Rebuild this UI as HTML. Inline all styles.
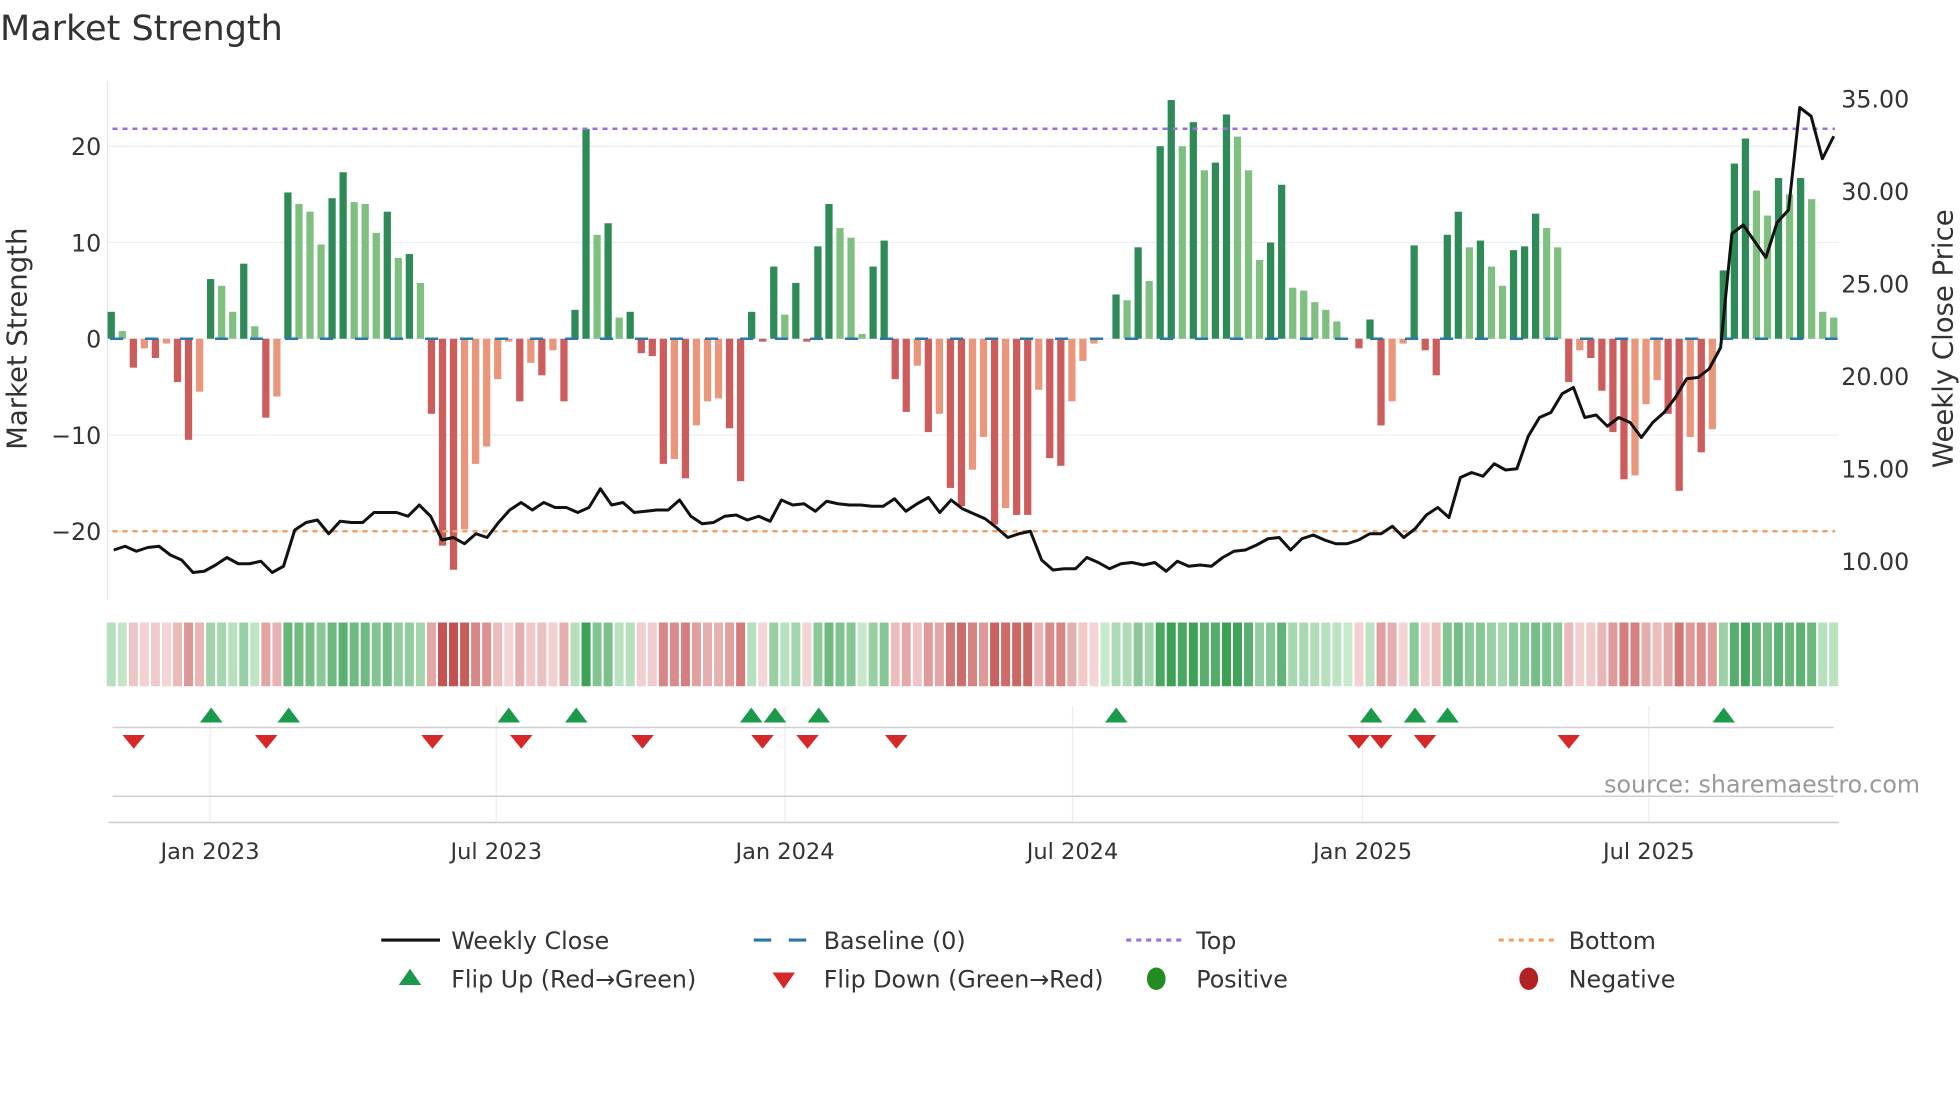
<!DOCTYPE html>
<html><head><meta charset="utf-8"><style>
html,body{margin:0;padding:0;background:#fff;width:1960px;height:1102px;overflow:hidden}
svg{display:block}
text{font-family:"DejaVu Sans","Liberation Sans",sans-serif;fill:#333}
</style></head><body>
<svg id="s" width="1960" height="1102" viewBox="0 0 1568 881.6" xmlns="http://www.w3.org/2000/svg">
<text x="0" y="32" font-size="28">Market Strength</text>
<g id="grid"></g>
<g id="bars"></g>
<line x1="88" y1="271" x2="1470" y2="271" stroke="#2a78a8" stroke-width="2" stroke-dasharray="10.5,17.5"/>
<line x1="90" y1="103" x2="1468" y2="103" stroke="#9b6fe0" stroke-width="2" stroke-dasharray="4,4"/>
<line x1="90" y1="425" x2="1468" y2="425" stroke="#f0a060" stroke-width="2" stroke-dasharray="4,4"/>
<polyline id="price" fill="none" stroke="#111" stroke-width="2.4" stroke-linejoin="round"/>
<g id="heat"></g>
<g id="marks"></g>
<g font-size="19" text-anchor="end">
<text x="81" y="124">20</text><text x="81" y="201">10</text><text x="81" y="278">0</text>
<text x="81" y="355">−10</text><text x="81" y="432">−20</text>
</g>
<g font-size="19">
<text x="1473" y="86">35.00</text><text x="1473" y="160">30.00</text><text x="1473" y="234">25.00</text>
<text x="1473" y="308">20.00</text><text x="1473" y="382">15.00</text><text x="1473" y="456">10.00</text>
</g>
<text transform="translate(21,271) rotate(-90)" font-size="22" text-anchor="middle">Market Strength</text>
<text transform="translate(1562,271) rotate(-90)" font-size="22" text-anchor="middle">Weekly Close Price</text>
<g font-size="18" text-anchor="middle">
<text x="168" y="687">Jan 2023</text><text x="397" y="687">Jul 2023</text><text x="628" y="687">Jan 2024</text>
<text x="858" y="687">Jul 2024</text><text x="1090" y="687">Jan 2025</text><text x="1319" y="687">Jul 2025</text>
</g>
<text x="1536" y="634" font-size="19" text-anchor="end" style="fill:#999">source: sharemaestro.com</text>
<g font-size="19">
<line x1="305" y1="752" x2="352" y2="752" stroke="#111" stroke-width="2.5"/>
<text x="361" y="759">Weekly Close</text>
<line x1="603" y1="752" x2="617" y2="752" stroke="#2a78a8" stroke-width="2.5"/>
<line x1="631" y1="752" x2="645" y2="752" stroke="#2a78a8" stroke-width="2.5"/>
<text x="659" y="759">Baseline (0)</text>
<line x1="901" y1="752" x2="946" y2="752" stroke="#9b6fe0" stroke-width="2.5" stroke-dasharray="4,4"/>
<text x="957" y="759">Top</text>
<line x1="1199" y1="752" x2="1244" y2="752" stroke="#f0a060" stroke-width="2.5" stroke-dasharray="4,4"/>
<text x="1255" y="759">Bottom</text>
<polygon points="328,775 319,788 337,788" fill="#1a9a4a"/>
<text x="361" y="790">Flip Up (Red→Green)</text>
<polygon points="618,778 636,778 627,791" fill="#d62828"/>
<text x="659" y="790">Flip Down (Green→Red)</text>
<ellipse cx="925" cy="783" rx="7.5" ry="9" fill="#228b22"/>
<text x="957" y="790">Positive</text>
<ellipse cx="1223" cy="783" rx="7.5" ry="9" fill="#b22222"/>
<text x="1255" y="790">Negative</text>
</g>
</svg>
<script>
var NS="http://www.w3.org/2000/svg";
function el(p,t,a){var e=document.createElementNS(NS,t);for(var k in a)e.setAttribute(k,a[k]);document.getElementById(p).appendChild(e);return e;}
var v=[2.8,0.8,-3,-1,-2,-0.5,-4.5,-10.5,-5.5,6.2,5.5,2.8,7.8,1.3,-8.2,-6,15.2,14,13.2,9.8,14.6,17.3,14.2,14,11,13.2,8.4,8.8,5.8,-7.8,-21.5,-24,-19.8,-13,-11.2,-4.2,-0.3,-6.5,-2.5,-3.8,-1.2,-6.5,3,21.8,10.8,12,2.2,2.8,-1.5,-1.8,-13,-12.5,-14.5,-9,-6.5,-6.2,-9.3,-14.8,2.8,-0.3,7.5,2.5,5.8,-0.3,9.6,14,11.5,10.5,0.5,7.5,10.2,-4.2,-7.6,-2.8,-9.7,-7.8,-15.5,-17.4,-13.6,-10.2,-19.3,-17.6,-18.3,-18.3,-5.3,-12.4,-13.2,-6.5,-2.3,-0.5,0,4.6,4,9.5,6,20,24.8,20,22.5,17.5,18.3,23.3,21,17.5,8.2,10,16,5.3,5,3.8,3,1.8,0,-1,2,-9,-6.5,-0.5,9.7,-1.2,-3.8,10.8,13.2,9.5,10.2,7.5,5.5,9.2,9.6,13,11.5,9.5,-4.5,-1.2,-2,-5.4,-9.7,-14.6,-14.2,-6.8,-4.3,-7.8,-15.8,-10.2,-11.8,-9.4,7.1,18.2,20.8,15.4,12.8,16.7,15,16.7,14.5,2.8,2.2];
var n=v.length,x0=89,dx=(1467-89)/(n-1);
[117,194,271,348,425].forEach(function(y){el("grid","line",{x1:87,x2:1471,y1:y,y2:y,stroke:"#eceef4","stroke-width":1});});
el("grid","line",{x1:86,x2:86,y1:65,y2:480,stroke:"#e5e7ef","stroke-width":1});
[168,397,628,858,1090,1319].forEach(function(x){el("grid","line",{x1:x,x2:x,y1:565,y2:658,stroke:"#eceef2","stroke-width":1});});
el("grid","line",{x1:90,x2:1467,y1:582,y2:582,stroke:"#d0d0d0","stroke-width":1.2});
el("grid","line",{x1:90,x2:1467,y1:637,y2:637,stroke:"#d0d0d0","stroke-width":1.2});
el("grid","line",{x1:87,x2:1471,y1:658,y2:658,stroke:"#ccc","stroke-width":1.2});
function mix(a,b,t){return "rgb("+[0,1,2].map(function(i){return Math.round(a[i]+(b[i]-a[i])*t)}).join(",")+")";}
for(var i=0;i<n;i++){
 var x=x0+i*dx,val=v[i],prev=i?v[i-1]:0,c;
 if(val>=0)c=(val>=prev)?"#2e8b57":"#7fbf7f";else c=(val<=prev)?"#cd5c5c":"#e9967a";
 var y=271-val*7.7;
 if(Math.abs(val)>0.05)el("bars","rect",{x:x-2.9,y:Math.min(y,271),width:5.8,height:Math.abs(val*7.7),fill:c});
 var t=Math.min(Math.abs(val)/22,1),hc;
 if(val>=0)hc=mix([200,233,205],[60,160,85],t);else hc=mix([245,215,215],[195,80,78],t);
 el("heat","rect",{x:x-3.6,y:498,width:7.2,height:51,fill:hc});
}
var py=[440,437,441,438,437,444,448,458,457,452,446,451,451,449,458,453,424,418,416,427,417,418,418,410,410,410,413,404,413,432,430,435,427,430,418,408,402,408,402,406,406,410,406,391,404,402,410,409,408,408,400,413,419,418,413,412,416,413,417,400,404,403,409,401,403,404,404,405,405,399,409,403,398,410,400,407,411,415,422,430,427,425,448,456,455,455,446,450,455,451,450,452,450,457,449,453,452,453,446,441,440,436,431,430,440,431,428,432,435,435,432,427,427,421,430,423,412,406,414,382,378,381,371,376,375,349,334,330,315,310,334,332,341,334,338,350,338,330,318,303,302,295,278,187,180,193,206,178,168,86,93,127,109];
var pts=[],m=py.length,pdx=(1467-91)/(m-1);
for(var j=0;j<m;j++)pts.push((91+j*pdx).toFixed(1)+","+py[j]);
document.getElementById("price").setAttribute("points",pts.join(" "));
[169,231,407,461,601,620,655,893,1097,1132,1158,1379].forEach(function(x){el("marks","polygon",{points:(x)+",566 "+(x-9)+",578 "+(x+9)+",578",fill:"#1a9a4a"});});
[107,213,346,417,514,610,646,717,1087,1105,1140,1255].forEach(function(x){el("marks","polygon",{points:(x-9)+",588 "+(x+9)+",588 "+x+",599",fill:"#d62828"});});
</script>
</body></html>
